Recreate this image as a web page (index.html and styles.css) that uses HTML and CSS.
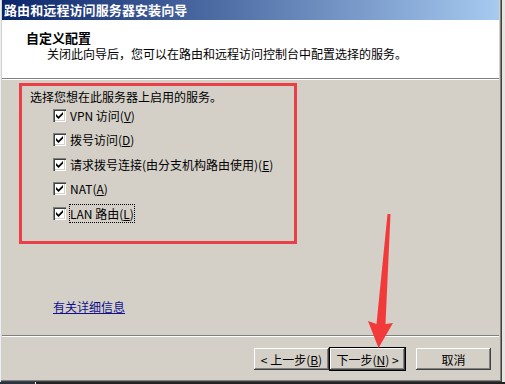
FILE: index.html
```
<html>
    <head>
        <title>路由和远程访问服务器安装向导</title>
        <meta charset="utf-8">
        <link rel="stylesheet" href="styles.css">
    </head>
    <body>
        <div class="window">
            <div class="titlebar">路由和远程访问服务器安装向导</div>
            <header>
                <h1>自定义配置</h1>
                <p>关闭此向导后，您可以在路由和远程访问控制台中配置选择的服务。</p>
            </header>
            <main>
                <section class="marked">
                    <p class="intro">选择您想在此服务器上启用的服务。</p>
                    <label class="row"><span class="check"></span><span>VPN 访问(<u>V</u>)</span></label>
                    <label class="row"><span class="check"></span><span>拨号访问(<u>D</u>)</span></label>
                    <label class="row"><span class="check"></span><span>请求拨号连接(由分支机构路由使用)(<u>E</u>)</span></label>
                    <label class="row"><span class="check"></span><span>NAT(<u>A</u>)</span></label>
                    <label class="row"><span class="check"></span><span class="focus">LAN 路由(<u>L</u>)</span></label>
                </section>
                <a class="more" href="#">有关详细信息</a>
            </main>
            <footer>
                <button>&lt; 上一步(<u>B</u>)</button>
                <button class="default">下一步(<u>N</u>) &gt;</button>
                <button class="cancel">取消</button>
            </footer>
        </div>
        <div class="taskbar"></div>
        <svg class="arrow" width="505" height="384" viewBox="0 0 505 384">
            <polygon points="387.5,214 390.5,214 385.5,324 393,323 378.5,348 368,321 376.5,324" fill="#f33a3a"/>
        </svg>
    </body>
</html>
```
FILE: styles.css
```
body {
    margin: 0;
    width: 505px;
    height: 384px;
    overflow: hidden;
    background: #e6e4de;
    font-family: "Noto Sans CJK SC", sans-serif;
    font-size: 12px;
    color: #000;
    position: relative;
}

.window {
    width: 502px;
    height: 382px;
    box-sizing: border-box;
    padding: 0 3px 2px 2px;
    background: #d4d0c8;
    box-shadow: inset 1px 0 #eaeef8, inset -1px -1px #404040, inset -2px -2px #808080;
    display: flex;
    flex-direction: column;
}

.titlebar {
    height: 20px;
    line-height: 20px;
    padding-left: 2px;
    background: linear-gradient(to right, #0a246a, #a6caf0);
    color: white;
    font-weight: bold;
    font-size: 13px;
    letter-spacing: 0.1px;
}

header {
    height: 59px;
    box-sizing: border-box;
    background: white;
    padding: 9px 0 0 24px;
    border-bottom: 1px solid #808080;
    box-shadow: 0 1px #fff;
}

h1 {
    margin: 0;
    font-size: 13px;
    line-height: 17px;
    font-weight: bold;
}

p {
    margin: 0;
}

header p {
    padding: 1px 0 0 21px;
    line-height: 14px;
}

main {
    flex: 1;
    padding-top: 4px;
    display: flex;
    flex-direction: column;
}

.marked {
    margin-left: 17px;
    width: 278px;
    height: 161px;
    box-sizing: border-box;
    border: 3px solid #ea3f47;
    padding: 4px 0 0 8px;
}

.intro {
    line-height: 13px;
}

.row {
    height: 24.5px;
    display: flex;
    align-items: center;
    gap: 4px;
    padding-left: 23px;
}

.check {
    width: 13px;
    height: 13px;
    box-sizing: border-box;
    background: white url("data:image/svg+xml,%3Csvg xmlns='http://www.w3.org/2000/svg' width='9' height='9'%3E%3Cpath d='M1 3 L3.5 5.5 L8 1 L8 3.5 L3.5 8 L1 5.5Z' fill='black'/%3E%3C/svg%3E") 2px 2px no-repeat;
    box-shadow: inset 1px 1px #808080, inset 2px 2px #404040, inset -1px -1px #fff, inset -2px -2px #d4d0c8;
}

.focus {
    outline: 1px dotted #000;
    outline-offset: 0;
}

.more {
    margin: 56px 0 0 51px;
    align-self: flex-start;
    color: #10108c;
    line-height: 14px;
}

footer {
    height: 45px;
    box-sizing: border-box;
    border-top: 1px solid #808080;
    box-shadow: inset 0 1px #fff;
    padding: 12px 8px 0 0;
    display: flex;
    justify-content: flex-end;
    align-items: flex-start;
}

button {
    width: 75px;
    height: 22px;
    padding: 0;
    font: inherit;
    background: #d4d0c8;
    border: none;
    box-shadow: inset -1px -1px #404040, inset 1px 1px #fff, inset -2px -2px #808080;
}

button.default {
    width: 75px;
    margin-left: 1px;
    box-shadow: 0 0 0 1px #000, inset -1px -1px #404040, inset 1px 1px #fff, inset -2px -2px #808080;
}

button.cancel {
    margin-left: 11px;
}

.taskbar {
    height: 2px;
    background: linear-gradient(to right, #2a3340 35px, #f4f4f4 35px, #f4f4f4 36px, #222 36px);
}

.arrow {
    position: absolute;
    left: 0;
    top: 0;
    pointer-events: none;
}
```
